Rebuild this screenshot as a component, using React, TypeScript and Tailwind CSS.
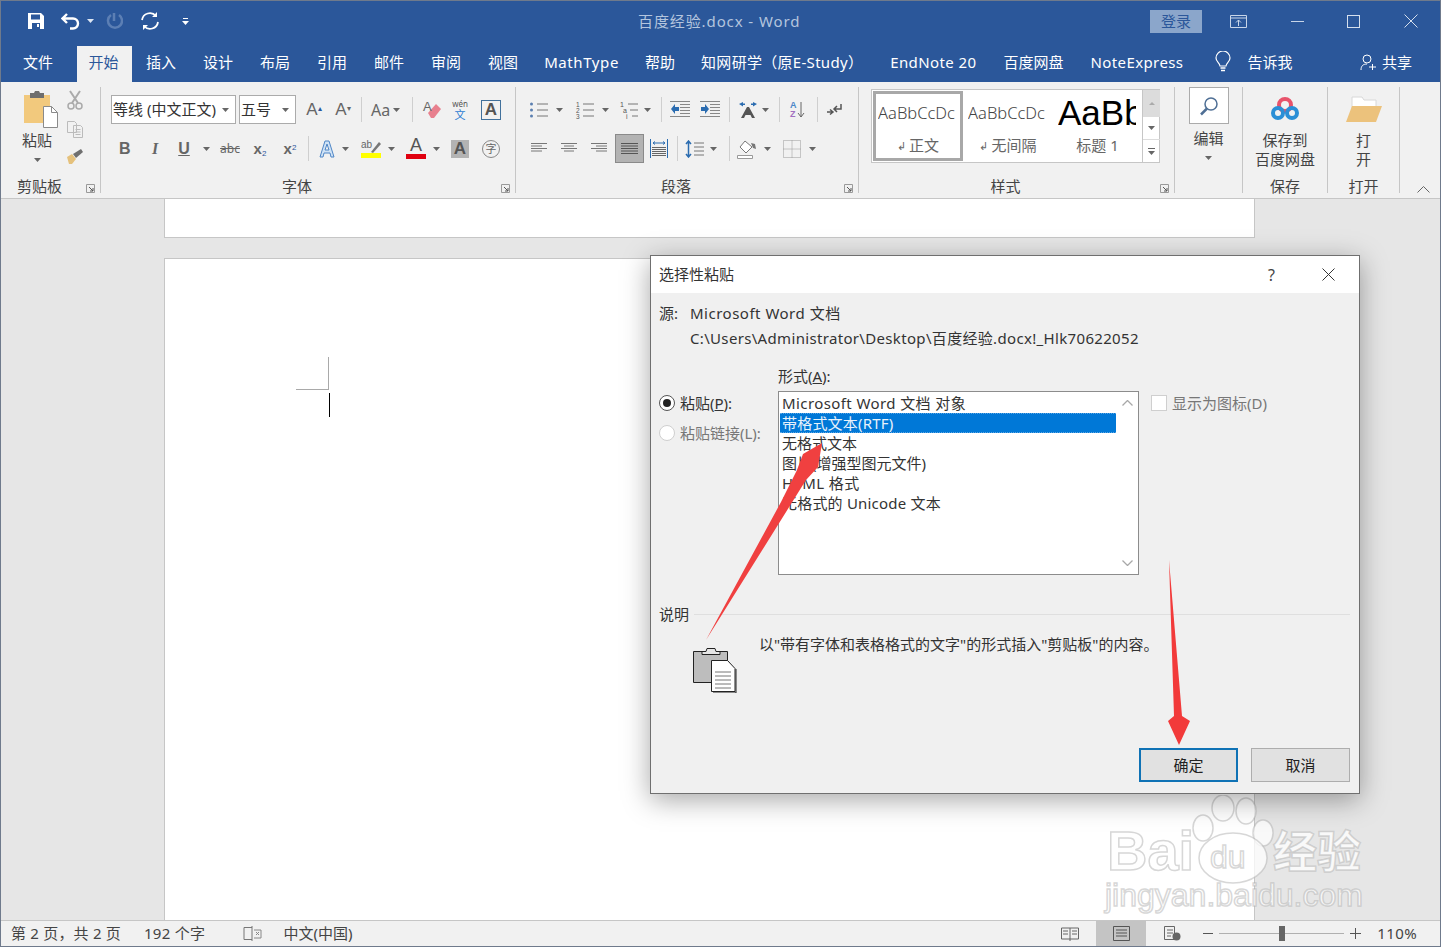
import React from "react";

const Caret = ({ c = "" , color = "#666" }: { c?: string; color?: string }) => (
  <svg width="7" height="4" viewBox="0 0 7 4" className={`shrink-0 ${c}`}><path d="M0 0h7L3.500 4z" fill={color} /></svg>
);
const Sep = ({ c = "" }: { c?: string }) => <div className={`w-px h-[25px] bg-[#cfcfcf] shrink-0 ${c}`} />;
const GroupSep = () => <div className="w-px my-[5px] bg-[#c6c6c6] shrink-0" />;
const Launcher = ({ c = "" }: { c?: string }) => (
  <svg width="9" height="9" viewBox="0 0 9 9" className={`shrink-0 ${c}`}><path d="M.5 8.500V.5h8v8z" fill="none" stroke="#9a9a9a" /><path d="M3 3l4 4M7 4v3H4" fill="none" stroke="#555" /></svg>
);
const GroupLabel = ({ t, l = true }: { t: string; l?: boolean }) => (
  <div className={`mt-auto h-[24px] w-full flex items-center justify-center relative text-[15px] text-[#444] leading-none whitespace-nowrap ${l ? "pr-[22px]" : ""}`}>
    {t}
    {l && <Launcher c="absolute right-[5px] bottom-[5px]" />}
  </div>
);
const Lines = ({ w = 16, rows, color = "#777" }: { w?: number; rows: [number, number][]; color?: string }) => (
  <svg width={w} height="13" viewBox={`0 0 ${w} 13`} className="shrink-0">
    {rows.map(([a, b], i) => <path key={i} d={`M${a} ${1.5 + i * 2.5}H${b}`} stroke={color} />)}
  </svg>
);

function Paste() {
  return (
    <svg width="36" height="40" viewBox="0 0 36 40" className="shrink-0">
      <path d="M1 5h26v28H1z" fill="#f2c97d" />
      <path d="M7 3h4l1-2h4l1 2h4v5H7z" fill="#6e6e6e" />
      <path d="M20.500 16.500h8l6 6v15h-14z" fill="#fff" stroke="#8a8a8a" />
      <path d="M28.500 16.500v6h6" fill="none" stroke="#8a8a8a" />
    </svg>
  );
}

function Clipboard() {
  return (
    <div className="w-[99px] flex shrink-0 flex-col">
      <div className="flex">
        <div className="ml-[20px] w-[32px] flex flex-col items-center mt-[8px]">
          <div className="ml-[7px]"><Paste /></div>
          <div className="text-[15px] text-[#444] leading-none mt-[3px] whitespace-nowrap">粘贴</div>
          <Caret c="mt-[10px]" />
        </div>
        <div className="ml-[13px] flex flex-col items-center mt-[8px] gap-[10px]">
          <svg width="18" height="20" viewBox="0 0 18 20" className="shrink-0"><path d="M4 1l8 12M14 1L6 13" stroke="#aaa" strokeWidth="2" fill="none" /><circle cx="5" cy="16" r="3" fill="none" stroke="#aaa" strokeWidth="1.500" /><circle cx="13" cy="16" r="3" fill="none" stroke="#aaa" strokeWidth="1.500" /></svg>
          <svg width="18" height="18" viewBox="0 0 18 18" className="shrink-0"><path d="M1.500 1.500h7l2 2v9h-9z M7.500 5.500h7l2 2v10h-9z" fill="#f1f1f1" stroke="#bbb" /><path d="M9.500 9.500h5M9.500 12h5M9.500 14.500h5" stroke="#bbb" /></svg>
          <svg width="18" height="16" viewBox="0 0 18 16" className="shrink-0"><path d="M1 9l5-3 4 5-4 5H3z" fill="#e5c17c" /><path d="M7 6l3 4 7-6-2-3z" fill="#6f6f6f" /></svg>
        </div>
      </div>
      <GroupLabel t="剪贴板" />
    </div>
  );
}

const Combo = ({ t, w, gap }: { t: string; w: string; gap: string }) => (
  <div className={`${w} h-[29px] bg-white border border-[#ababab] flex items-center pl-[1px] text-[15px] text-[#333] whitespace-nowrap shrink-0`}>
    <span>{t}</span><Caret c={gap} />
  </div>
);
const Letter = ({ t, c }: { t: React.ReactNode; c: string }) => (
  <span className={`shrink-0 text-center leading-none ${c}`}>{t}</span>
);

function FontGroup() {
  return (
    <div className="w-[414px] flex shrink-0 flex-col">
      <div className="flex items-center h-[29px] mt-[13px]">
        <div className="ml-[10px]"><Combo t="等线 (中文正文)" w="w-[125px]" gap="ml-[6px]" /></div>
        <div className="ml-[3px]"><Combo t="五号" w="w-[57px]" gap="ml-[11px]" /></div>
        <Letter c="ml-[10px] w-[16px] text-[17px] text-[#666] [font-family:'Liberation_Sans']" t={<>A<sup className="text-[8px] text-[#2b579a]">▴</sup></>} />
        <Letter c="ml-[13px] w-[16px] text-[17px] text-[#666] [font-family:'Liberation_Sans']" t={<>A<sup className="text-[8px] text-[#666]">▾</sup></>} />
        <Sep c="ml-[10px]" />
        <Letter c="ml-[9px] w-[18px] text-[16px] text-[#666]" t="Aa" />
        <Caret c="ml-[4px]" />
        <Sep c="ml-[12px]" />
        <svg width="20" height="20" viewBox="0 0 20 20" className="ml-[9px] shrink-0"><path d="M6 13l8-9 5 5-7 9h-3z" fill="#e8808e" /><text x="1" y="11" fontSize="13" fill="#666" fontFamily="Liberation Sans">A</text></svg>
        <div className="ml-[10px] w-[16px] flex flex-col items-center leading-none whitespace-nowrap">
          <span className="text-[8px] text-[#555] leading-[10px]">wén</span>
          <span className="text-[11px] text-[#2b7cd3] leading-[11px]">文</span>
        </div>
        <div className="ml-[13px] w-[20px] h-[20px] border border-[#41719c] flex items-center justify-center text-[17px] text-[#555] leading-none [font-family:'Liberation_Sans'] font-bold">A</div>
      </div>
      <div className="flex items-center h-[29px] mt-[10px] text-[#666]">
        <Letter c="ml-[18px] w-[10px] text-[16px] font-bold [font-family:'Liberation_Sans']" t="B" />
        <Letter c="ml-[21px] w-[10px] text-[16px] font-bold italic [font-family:'Liberation_Serif']" t="I" />
        <Letter c="ml-[18px] w-[12px] text-[16px] font-bold underline [font-family:'Liberation_Sans']" t="U" />
        <Caret c="ml-[13px]" />
        <Letter c="ml-[10px] w-[20px] text-[12px] line-through" t="abc" />
        <Letter c="ml-[12px] w-[16px] text-[15px] font-bold [font-family:'Liberation_Sans']" t={<>x<sub className="text-[8px] font-normal text-[#2b579a]">2</sub></>} />
        <Letter c="ml-[14px] w-[16px] text-[15px] font-bold [font-family:'Liberation_Sans']" t={<>x<sup className="text-[8px] font-normal text-[#2b579a]">2</sup></>} />
        <Sep c="ml-[10px]" />
        <svg width="16" height="18" viewBox="0 0 16 18" className="ml-[10px] shrink-0"><path d="M6 1h4l5 16h-3l-1-4H5l-1 4H1z M6 10h4L8 4z" fill="#cfe2f5" stroke="#4f86c6" fillRule="evenodd" /></svg>
        <Caret c="ml-[7px]" />
        <div className="ml-[12px] w-[20px] flex flex-col items-center">
          <svg width="20" height="14" viewBox="0 0 20 14" className="shrink-0"><text x="0" y="9" fontSize="10" fill="#666" fontFamily="Liberation Sans">ab</text><path d="M10 13l8-10 2 2-8 9z" fill="#777" /></svg>
          <div className="w-[20px] h-[5px] bg-[#ffff00]" />
        </div>
        <Caret c="ml-[7px]" />
        <div className="ml-[11px] w-[20px] flex flex-col items-center">
          <span className="text-[18px] leading-[15px] text-[#555] [font-family:'Liberation_Sans']">A</span>
          <div className="w-[20px] h-[5px] bg-[#e0000f] mt-[1px]" />
        </div>
        <Caret c="ml-[7px]" />
        <div className="ml-[11px] w-[18px] h-[18px] bg-[#b3b3b3] text-center text-[17px] leading-[18px] text-[#555] font-bold [font-family:'Liberation_Sans']">A</div>
        <div className="ml-[13px] w-[18px] h-[18px] rounded-full border border-[#888] flex items-center justify-center text-[11px] text-[#666] leading-none">字</div>
      </div>
      <GroupLabel t="字体" />
    </div>
  );
}

const Bullets = ({ kind }: { kind: number }) => (
  <svg width="20" height="18" viewBox="0 0 20 18" className="shrink-0">
    {[3, 9, 15].map((y, i) => (
      <g key={y}>
        {kind === 0 && <circle cx="2.500" cy={y} r="1.500" fill="#5b7fb0" />}
        {kind === 1 && <text x="1" y={y + 2.5} fontSize="6.500" fill="#555" fontFamily="Liberation Sans">{i + 1}</text>}
        {kind === 2 && <text x={1 + i * 3} y={y + 2.5} fontSize="7" fill="#555" fontFamily="Liberation Sans">{["1", "a", "i"][i]}</text>}
        <path d={`M${kind === 2 ? 9 + i * 2 : 8} ${y}H19`} stroke="#777" />
      </g>
    ))}
  </svg>
);
const Indent = ({ flip }: { flip?: boolean }) => (
  <svg width="20" height="17" viewBox="0 0 20 17" className="shrink-0">
    {[0.5, 3.5, 6.5, 9.5, 12.5, 15.5].map((y, i) => <path key={y} d={`M${i === 0 || i === 5 ? 0 : 10} ${y}H20`} stroke="#888" />)}
    <path d={flip ? "M1 6h4V3l4 5-4 5v-3H1z" : "M9 6H5V3L1 8l4 5v-3h4z"} fill="#2b6cb0" />
  </svg>
);

function ParaGroup() {
  return (
    <div className="w-[342px] flex shrink-0 flex-col">
      <div className="flex items-center h-[29px] mt-[13px]">
        <div className="ml-[13px]"><Bullets kind={0} /></div>
        <Caret c="ml-[7px]" />
        <div className="ml-[12px]"><Bullets kind={1} /></div>
        <Caret c="ml-[7px]" />
        <div className="ml-[10px]"><Bullets kind={2} /></div>
        <Caret c="ml-[5px]" />
        <Sep c="ml-[10px]" />
        <div className="ml-[8px]"><Indent /></div>
        <div className="ml-[10px]"><Indent flip /></div>
        <Sep c="ml-[9px]" />
        <svg width="20" height="18" viewBox="0 0 20 18" className="ml-[8px] shrink-0"><path d="M3 17L9 6h2l6 11h-3l-1.500-3h-5L6 17z" fill="#555" /><path d="M1 3l4-2v1.500h2v1.500H5V5.500zM19 3l-4-2v1.500h-2v1.500h2v1.500z" fill="#2b6cb0" /></svg>
        <Caret c="ml-[4px]" />
        <Sep c="ml-[10px]" />
        <div className="ml-[10px] w-[16px] flex items-center">
          <div className="flex flex-col text-[9px] leading-[9px] font-bold [font-family:'Liberation_Sans']"><span className="text-[#4a86c8]">A</span><span className="text-[#a26fc0]">Z</span></div>
          <svg width="8" height="18" viewBox="0 0 8 18" className="shrink-0"><path d="M4 1v15M1 12l3 4 3-4" fill="none" stroke="#666" /></svg>
        </div>
        <Sep c="ml-[11px]" />
        <svg width="16" height="14" viewBox="0 0 16 14" className="ml-[8px] shrink-0"><path d="M15 1v5H9M11 3L8 6l3 3" fill="none" stroke="#555" strokeWidth="1.500" /><path d="M1 9h5M4 6.500L7 9l-3 2.500" fill="none" stroke="#555" strokeWidth="1.500" /></svg>
      </div>
      <div className="flex items-center h-[29px] mt-[10px]">
        <div className="ml-[15px]"><Lines rows={[[0, 16], [0, 11], [0, 16], [0, 11]]} /></div>
        <div className="ml-[14px]"><Lines rows={[[0, 16], [3, 13], [0, 16], [3, 13]]} /></div>
        <div className="ml-[14px]"><Lines rows={[[0, 16], [5, 16], [0, 16], [5, 16]]} /></div>
        <div className="ml-[8px] w-[29px] h-[29px] bg-[#b3b3b3] border border-[#8a8a8a] flex items-center justify-center shrink-0">
          <Lines w={17} color="#555" rows={[[0, 17], [0, 17], [0, 17], [0, 17], [0, 17]]} />
        </div>
        <svg width="18" height="19" viewBox="0 0 18 19" className="ml-[6px] shrink-0">
          <path d="M.5 0v19M17.500 0v19" stroke="#2b6cb0" />
          <path d="M3 4h12M5 2.500L3 4l2 1.500M13 2.500L15 4l-2 1.500" stroke="#2b6cb0" fill="none" />
          {[8, 10, 12, 14, 16].map((y) => <path key={y} d={`M2 ${y + 0.5}H16`} stroke="#666" />)}
        </svg>
        <Sep c="ml-[9px]" />
        <svg width="20" height="18" viewBox="0 0 20 18" className="ml-[7px] shrink-0"><path d="M3.500 1v16M1 4l2.500-3L6 4M1 14l2.500 3L6 14" fill="none" stroke="#2b6cb0" strokeWidth="1.500" /><path d="M9 3h10M9 7h10M9 11h10M9 15h10" stroke="#777" /></svg>
        <Caret c="ml-[5px]" />
        <Sep c="ml-[12px]" />
        <svg width="20" height="20" viewBox="0 0 20 20" className="ml-[7px] shrink-0"><path d="M8 2l7 6-6 6-6-6z" fill="#fff" stroke="#777" /><path d="M14 4l4 1 1 5-3-1z" fill="#777" /><path d="M.5 16.500h15v3H.5z" fill="#fff" stroke="#999" /></svg>
        <Caret c="ml-[7px]" />
        <svg width="18" height="18" viewBox="0 0 18 18" className="ml-[12px] shrink-0"><path d="M.5.500h17v17H.500zM9 .5v17M.5 9h17" fill="none" stroke="#999" strokeDasharray="1 1" /></svg>
        <Caret c="ml-[8px]" />
      </div>
      <GroupLabel t="段落" />
    </div>
  );
}

const StyleCard = ({ big, t, sel, mark, w }: { big?: boolean; t: string; sel?: boolean; mark?: boolean; w: string }) => (
  <div className={`${w} h-[70px] shrink-0 flex flex-col items-center overflow-hidden border-[3px] ${sel ? "border-[#a8a8a8]" : "border-transparent"}`}>
    <div className={`h-[41px] w-[78px] flex items-center justify-start overflow-hidden whitespace-nowrap leading-none ${big ? "text-[35px] text-black pb-[4px] -ml-[1px]" : "text-[16.500px] text-[#444] pb-[2px] -ml-[2px]"}`}>
      <span className={big ? "[font-family:'Liberation_Sans']" : "font-light"}>{big ? "AaBb" : "AaBbCcDc"}</span>
    </div>
    <div className="text-[15px] text-[#666] leading-none mt-[3px] whitespace-nowrap flex items-center">
      {mark && <span className="text-[11px] mr-[3px]">↲</span>}{t}
    </div>
  </div>
);

function StylesGroup() {
  return (
    <div className="w-[315px] flex shrink-0 flex-col">
      <div className="flex mt-[7px] ml-[12px] w-[289px] h-[74px] bg-white border border-[#c6c6c6] items-center pl-[1px]">
        <StyleCard sel mark t="正文" w="w-[90px]" />
        <StyleCard mark t="无间隔" w="w-[90px]" />
        <StyleCard big t="标题 1" w="w-[89px]" />
        <div className="w-[18px] h-[72px] flex flex-col border-l border-[#c6c6c6] shrink-0">
          <div className="h-[26px] bg-[#dcdcdc] flex items-center justify-center"><svg width="6" height="3" viewBox="0 0 6 3" className="shrink-0"><path d="M0 3h6L3 0z" fill="#aaa" /></svg></div>
          <div className="h-[24px] flex items-center justify-center border-y border-[#dcdcdc]"><Caret /></div>
          <div className="flex-1 flex flex-col items-center justify-center gap-[2px]"><div className="w-[7px] h-px bg-[#666]" /><Caret /></div>
        </div>
      </div>
      <GroupLabel t="样式" />
    </div>
  );
}

function Ribbon() {
  return (
    <div className="flex h-[117px] bg-[#f1f1f1] border-b border-[#c6c6c6] shrink-0">
      <Clipboard /><GroupSep /><FontGroup /><GroupSep /><ParaGroup /><GroupSep /><StylesGroup /><GroupSep />
      <div className="w-[67px] flex shrink-0 flex-col items-center">
        <div className="mt-[5px] w-[40px] h-[37px] bg-white border border-[#ababab] flex items-center justify-center">
          <svg width="20" height="20" viewBox="0 0 20 20" className="shrink-0"><circle cx="12" cy="8" r="6" fill="none" stroke="#4f6f95" strokeWidth="1.500" /><path d="M8 12.500L2 18.500" stroke="#4f6f95" strokeWidth="2.500" /></svg>
        </div>
        <div className="text-[15px] text-[#444] leading-none mt-[7px]">编辑</div>
        <Caret c="mt-[10px]" />
      </div>
      <GroupSep />
      <div className="w-[84px] flex shrink-0 flex-col items-center">
        <svg width="28" height="24" viewBox="0 0 28 24" className="mt-[15px] shrink-0"><circle cx="14" cy="8" r="6" fill="none" stroke="#e8536b" strokeWidth="4" /><circle cx="7" cy="16" r="5" fill="none" stroke="#2b8fd6" strokeWidth="4" /><circle cx="21" cy="16" r="5" fill="none" stroke="#2b8fd6" strokeWidth="4" /></svg>
        <div className="text-[15px] text-[#444] leading-[19px] mt-[10px] text-center whitespace-nowrap">保存到<br />百度网盘</div>
        <GroupLabel t="保存" l={false} />
      </div>
      <GroupSep />
      <div className="w-[71px] flex shrink-0 flex-col items-center">
        <svg width="36" height="26" viewBox="0 0 36 26" className="mt-[14px] shrink-0"><path d="M6 1h10l2 3h12v8H6z" fill="#fff" stroke="#d8d8d8" /><path d="M6 10h30l-6 16H0z" fill="#ecc27c" /></svg>
        <div className="text-[15px] text-[#444] leading-[19px] mt-[9px] text-center">打<br />开</div>
        <GroupLabel t="打开" l={false} />
      </div>
      <GroupSep />
      <div className="flex-1 flex items-end justify-end pr-[10px] pb-[5px]">
        <svg width="13" height="7" viewBox="0 0 13 7" className="shrink-0"><path d="M.5 6.500l6-6 6 6" fill="none" stroke="#666" /></svg>
      </div>
    </div>
  );
}

function TitleBar() {
  return (
    <div className="h-[40px] bg-[#2b579a] flex items-center shrink-0 relative text-white">
      <svg width="16" height="16" viewBox="0 0 16 16" className="ml-[27px] shrink-0"><path d="M0 0h13l3 3v13H0z" fill="#fff" /><path d="M3 1.500h9v5H3zM4 10h8v6H4z" fill="#2b579a" /><path d="M9 11h2v3H9z" fill="#fff" /></svg>
      <svg width="20" height="17" viewBox="0 0 20 17" className="ml-[17px] shrink-0"><path d="M6 1L1.500 5.500 6 10M2 5.500h10a5 5 0 0 1 0 10H9" fill="none" stroke="#fff" strokeWidth="2.400" /></svg>
      <Caret c="ml-[6px]" color="#dde6f3" />
      <svg width="17" height="18" viewBox="0 0 17 18" className="ml-[12px] shrink-0"><path d="M5 3a7 7 0 1 0 8 0M8 1v8" fill="none" stroke="#5c7fb4" strokeWidth="2.500" /></svg>
      <svg width="20" height="20" viewBox="0 0 20 20" className="ml-[17px] shrink-0"><path d="M2 9a8 8 0 0 1 14-4M18 11a8 8 0 0 1-14 4" fill="none" stroke="#fff" strokeWidth="1.800" /><path d="M17 1v5h-5zM3 19v-5h5z" fill="#fff" /></svg>
      <svg width="7" height="7" viewBox="0 0 7 7" className="ml-[22px] shrink-0"><path d="M1 .5h5" stroke="#fff" /><path d="M0 3h7L3.500 7z" fill="#fff" /></svg>
      <div className="absolute left-[637px] top-0 h-full flex items-center text-[15px] tracking-[0.9px] text-[#b4c5de] whitespace-nowrap">百度经验.docx - Word</div>
      <div className="ml-auto w-[52px] h-[23px] bg-[#8ba6cb] text-[#2b579a] text-[15px] flex items-center justify-center leading-none">登录</div>
      <svg width="17" height="13" viewBox="0 0 17 13" className="ml-[28px] shrink-0"><path d="M.5.500h16v12H.500zM.5 3h16" fill="none" stroke="#c8d5e8" /><path d="M8.500 5v6M6 7.500l2.500-2.500L11 7.500" fill="none" stroke="#c8d5e8" /></svg>
      <div className="ml-[44px] w-[13px] h-px bg-[#c8d5e8]" />
      <div className="ml-[43px] w-[13px] h-[13px] border border-[#d5dfed]" />
      <svg width="14" height="14" viewBox="0 0 14 14" className="ml-[44px] mr-[22px] shrink-0"><path d="M.5.500l13 13M13.500.500l-13 13" stroke="#d5dfed" /></svg>
    </div>
  );
}

function Tabs() {
  const tabs = ["插入", "设计", "布局", "引用", "邮件", "审阅", "视图"];
  const cell = "h-[36px] flex items-center pb-[4px]";
  return (
    <div className="h-[41px] bg-[#2b579a] flex items-end shrink-0 text-white text-[15px] pl-[22px] whitespace-nowrap">
      <div className={cell}>文件</div>
      <div className={`ml-[24px] w-[55px] bg-[#f1f1f1] text-[#2b579a] justify-center pr-[2px] ${cell}`}>开始</div>
      {tabs.map((t, i) => (
        <div key={t} className={`${cell} ${i === 0 ? "ml-[14px]" : "ml-[27px]"}`}>{t}</div>
      ))}
      <div className={`ml-[26px] tracking-[0.6px] ${cell}`}>MathType</div>
      <div className={`ml-[26px] ${cell}`}>帮助</div>
      <div className={`ml-[26px] tracking-[0.3px] ${cell}`}>知网研学（原E-Study）</div>
      <div className={`ml-[27px] tracking-[0.4px] ${cell}`}>EndNote 20</div>
      <div className={`ml-[27px] ${cell}`}>百度网盘</div>
      <div className={`ml-[27px] tracking-[0.4px] ${cell}`}>NoteExpress</div>
      <svg width="16" height="22" viewBox="0 0 16 22" className="ml-[32px] mb-[9px] shrink-0"><path d="M5 15c0-3-4-4-4-8a7 7 0 0 1 14 0c0 4-4 5-4 8z" fill="none" stroke="#fff" strokeWidth="1.200" /><path d="M5.500 17h5M6 19.500h4" stroke="#fff" strokeWidth="1.500" /></svg>
      <div className={`ml-[16px] ${cell}`}>告诉我</div>
      <div className={`ml-auto mr-[28px] ${cell}`}>
        <svg width="16" height="17" viewBox="0 0 16 17" className="mr-[6px] shrink-0"><circle cx="7" cy="5" r="4" fill="none" stroke="#fff" /><path d="M1 16c0-4 2-6 6-6M9 13h7M12.500 10v6" fill="none" stroke="#fff" /></svg>
        共享
      </div>
    </div>
  );
}

function Doc() {
  return (
    <div className="flex-1 bg-[#e6e6e6] overflow-hidden flex flex-col items-start">
      <div className="ml-[163px] w-[1091px] h-[39px] bg-white border-x border-b border-[#c6c6c6] shrink-0" />
      <div className="ml-[163px] mt-[20px] w-[1091px] h-[700px] bg-white border border-[#c6c6c6] shrink-0 pt-[98px] pl-[131px]">
        <div className="w-[33px] h-[33px] border-r border-b border-[#a9a9a9]" />
        <div className="w-px h-[24px] bg-black ml-[33px] mt-[3px]" />
      </div>
    </div>
  );
}

function StatusBar() {
  return (
    <div className="h-[26px] bg-[#f1f1f1] border-t border-[#c6c6c6] flex items-center shrink-0 text-[15px] text-[#444] whitespace-nowrap">
      <span className="ml-[10px] tracking-[0.2px]">第 2 页，共 2 页</span>
      <span className="ml-[23px] tracking-[0.3px]">192 个字</span>
      <svg width="19" height="15" viewBox="0 0 19 15" className="ml-[38px] shrink-0"><path d="M9 1.500H1v12h8M9 0v15" fill="none" stroke="#777" /><path d="M11 4h7v8h-7M13 6l3 3M16 6l-3 3" fill="none" stroke="#888" /></svg>
      <span className="ml-[21px]">中文(中国)</span>
      <svg width="18" height="15" viewBox="0 0 18 15" className="ml-auto shrink-0"><path d="M9 2H.5v11H9V2h8.500v11H9M2 5h5M2 8h5M11 5h5M11 8h5M9 13v2" fill="none" stroke="#666" /></svg>
      <div className="ml-[17px] w-[50px] h-full bg-[#c4c4c4] flex items-center justify-center">
        <svg width="17" height="15" viewBox="0 0 17 15" className="shrink-0"><path d="M.5.500h16v14H.500zM3 4h11M3 7h11M3 10h11" fill="none" stroke="#555" /></svg>
      </div>
      <svg width="17" height="15" viewBox="0 0 17 15" className="ml-[18px] shrink-0"><path d="M.5.500h10v13H.500zM3 4h6M3 7h6M3 10h4" fill="none" stroke="#666" /><circle cx="12.500" cy="10.500" r="4" fill="#666" /></svg>
      <div className="ml-[22px] w-[10px] h-px bg-[#555]" />
      <div className="ml-[6px] w-[125px] h-px bg-[#b0b0b0] flex items-center justify-center">
        <div className="w-[6px] h-[15px] bg-[#666]" />
      </div>
      <svg width="11" height="11" viewBox="0 0 11 11" className="ml-[6px] shrink-0"><path d="M0 5.500h11M5.500 0v11" stroke="#555" /></svg>
      <span className="ml-[16px] mr-[23px] tracking-[0.4px]">110%</span>
    </div>
  );
}

function Dialog() {
  const items = [
    { t: "带格式文本(RTF)", c: "bg-[#0078d7] text-[#e8f2fb] border-y border-dotted border-[#5aa5e4] tracking-[0.2px]" },
    { t: "无格式文本", c: "" },
    { t: "图片(增强型图元文件)", c: "" },
    { t: "HTML 格式", c: "tracking-[0.4px]" },
    { t: "无格式的 Unicode 文本", c: "tracking-[0.2px]" },
  ];
  return (
    <div className="absolute left-[649px] top-[254px] w-[710px] h-[539px] bg-[#f0f0f0] border border-[#6f6f6f] shadow-[0_6px_26px_rgba(0,0,0,0.35)] flex flex-col text-[15px] text-[#333] whitespace-nowrap">
      <div className="h-[37px] bg-white flex items-center pl-[8px] shrink-0">
        <span>选择性粘贴</span>
        <span className="ml-auto text-[#444] text-[16px]">?</span>
        <svg width="13" height="13" viewBox="0 0 13 13" className="ml-[47px] mr-[24px] shrink-0"><path d="M.5.500l12 12M12.500.500l-12 12" stroke="#333" /></svg>
      </div>
      <div className="flex pl-[8px] h-[25px] mt-[8px] items-center shrink-0"><span className="w-[31px]">源:</span><span className="tracking-[0.5px]">Microsoft Word 文档</span></div>
      <div className="flex pl-[39px] h-[25px] items-center shrink-0 tracking-[0.33px]">C:\Users\Administrator\Desktop\百度经验.docx!_Hlk70622052</div>
      <div className="pl-[127px] h-[20px] mt-[15px] flex items-center shrink-0"><span>形式(<span className="underline">A</span>):</span></div>
      <div className="flex pl-[8px] mt-[5px] items-start shrink-0">
        <div className="w-[119px] pt-[2px] shrink-0">
          <div className="h-[20px] flex items-center">
            <div className="w-[16px] h-[16px] rounded-full border border-[#555] bg-white flex items-center justify-center"><div className="w-[8px] h-[8px] rounded-full bg-[#222]" /></div>
            <span className="ml-[5px]">粘贴(<span className="underline">P</span>):</span>
          </div>
          <div className="h-[20px] mt-[10px] flex items-center text-[#777]">
            <div className="w-[16px] h-[16px] rounded-full border border-[#cfcfcf] bg-white" />
            <span className="ml-[5px]">粘贴链接(L):</span>
          </div>
        </div>
        <div className="w-[361px] h-[184px] bg-white border border-[#8c8c8c] flex shrink-0">
          <div className="w-[336px] ml-px pt-px">
            <div className="h-[20px] flex items-center px-[2px] tracking-[0.4px]">Microsoft Word 文档 对象</div>
            {items.map((it) => (
              <div key={it.t} className={`h-[20px] flex items-center px-[2px] ${it.c}`}>{it.t}</div>
            ))}
          </div>
          <div className="flex-1 flex flex-col items-center justify-between py-[8px]">
            <svg width="11" height="6" viewBox="0 0 11 6" className="shrink-0"><path d="M.5 5.500l5-5 5 5" fill="none" stroke="#a8a8a8" strokeWidth="1.300" /></svg>
            <svg width="11" height="6" viewBox="0 0 11 6" className="shrink-0"><path d="M.5.500l5 5 5-5" fill="none" stroke="#a8a8a8" strokeWidth="1.300" /></svg>
          </div>
        </div>
        <div className="ml-[12px] pt-[2px] h-[22px] flex items-center text-[#777]">
          <div className="w-[16px] h-[16px] bg-white border border-[#cfcfcf]" />
          <span className="ml-[5px]">显示为图标(D)</span>
        </div>
      </div>
      <div className="flex items-center pl-[8px] pr-[9px] h-[20px] mt-[29px] shrink-0">
        <span>说明</span><div className="ml-[5px] flex-1 h-px bg-[#dfdfdf]" />
      </div>
      <div className="flex pl-[42px] shrink-0">
        <svg width="44" height="46" viewBox="0 0 44 46" className="mt-[23px] shrink-0">
          <path d="M.5 4.500h34v31H.5z" fill="#bdbdbd" stroke="#222" />
          <path d="M9 4.500h4l1-3h8l1 3h4v3H9z" fill="#e6e6e6" stroke="#222" />
          <path d="M18.500 13.500h16l7.500 8v23H18.500z" fill="#fff" stroke="#222" />
          <path d="M22 25h16M22 29h16M22 33h16M22 37h16M22 41h16" stroke="#777" />
          <path d="M43 22v24H20" fill="none" stroke="#222" />
        </svg>
        <span className="ml-[22px] mt-[10px] h-[20px] leading-[20px]">以"带有字体和表格格式的文字"的形式插入"剪贴板"的内容。</span>
      </div>
      <div className="mt-auto mb-[11px] flex justify-end pr-[9px] gap-[13px] shrink-0 text-[#222]">
        <div className="w-[99px] h-[34px] bg-[#e1e1e1] border-2 border-[#0f72b5] flex items-center justify-center">确定</div>
        <div className="w-[99px] h-[34px] bg-[#e1e1e1] border border-[#adadad] flex items-center justify-center">取消</div>
      </div>
    </div>
  );
}

function Arrows() {
  return (
    <svg width="1441" height="947" viewBox="0 0 1441 947" className="absolute -left-px -top-px pointer-events-none">
      <polygon points="822,443 818,467 806,480 706,640 781,502 797,470 803,454" fill="#f04040" />
      <polygon points="1169,560 1182,716 1190,721 1179,745 1168,721 1174,716" fill="#f23a3a" />
    </svg>
  );
}

function Watermark() {
  const stroke = "[-webkit-text-stroke:1.500px_rgba(175,175,175,0.5)]";
  return (
    <div className="absolute left-[1104px] top-[794px] w-[262px] h-[124px] pointer-events-none">
      <svg width="262" height="124" viewBox="0 0 262 124" className="absolute left-0 top-0">
        <g fill="rgba(255,255,255,0.75)" stroke="rgba(175,175,175,0.5)" strokeWidth="1.500">
          <ellipse cx="118" cy="13" rx="11" ry="13" />
          <ellipse cx="141" cy="16" rx="10" ry="13" />
          <ellipse cx="98" cy="33" rx="10" ry="13" />
          <ellipse cx="158" cy="38" rx="10" ry="13" />
          <ellipse cx="128" cy="63" rx="34" ry="25" />
        </g>
      </svg>
      <span className={`absolute left-[2px] top-[28px] text-[56px] font-bold leading-none text-[rgba(255,255,255,0.78)] [font-family:'Liberation_Sans'] ${stroke}`}>Bai</span>
      <span className={`absolute left-[105px] top-[46px] text-[32px] leading-none text-[rgba(255,255,255,0.78)] [font-family:'Liberation_Sans'] ${stroke}`}>du</span>
      <span className={`absolute left-[168px] top-[34px] text-[44px] font-bold leading-none text-[rgba(255,255,255,0.78)] ${stroke}`}>经验</span>
      <span className={`absolute left-[0px] top-[84px] text-[32px] leading-none text-[rgba(255,255,255,0.78)] [font-family:'Liberation_Sans'] whitespace-nowrap ${stroke}`}>jingyan.baidu.com</span>
    </div>
  );
}

export default function App() {
  return (
    <div className="relative w-[1441px] h-[947px] box-border border border-[#6f7a8c] overflow-hidden flex flex-col [font-family:'Noto_Sans','Noto_Sans_CJK_SC',sans-serif]">
      <TitleBar />
      <Tabs />
      <Ribbon />
      <Doc />
      <StatusBar />
      <Watermark />
      <Dialog />
      <Arrows />
    </div>
  );
}
